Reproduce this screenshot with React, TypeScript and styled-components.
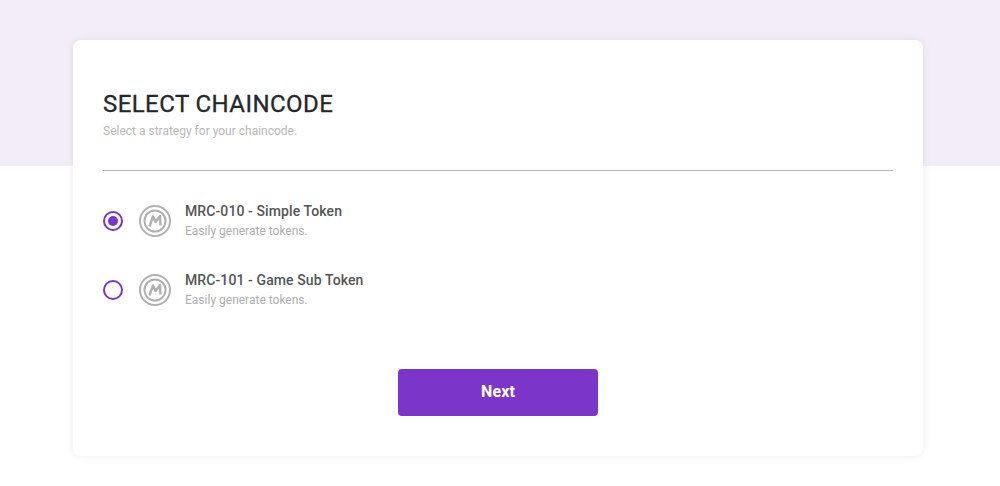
import React, { useState } from 'react';
import styled, { createGlobalStyle } from 'styled-components';

const GlobalStyle = createGlobalStyle`
  html, body {
    margin: 0;
    padding: 0;
    background: #fff;
    font-family: Roboto, "Liberation Sans", sans-serif;
  }
`;

const Page = styled.div`
  position: relative;
  height: 486px;
  overflow: hidden;
`;

const Banner = styled.div`
  height: 166px;
  background: #f3edf8;
`;

const Card = styled.div`
  position: absolute;
  top: 40px;
  left: 73px;
  box-sizing: border-box;
  width: 850px;
  height: 416px;
  padding: 50px 30px 0;
  background: #fff;
  border-radius: 8px;
  box-shadow: 0 0 10px rgba(0, 0, 0, 0.08);
`;

const Header = styled.div`
  height: 80px;
  border-bottom: 1px solid #b5b5b5;
`;

const Title = styled.h1`
  margin: 0;
  font-size: 24px;
  line-height: 28px;
  font-weight: 400;
  letter-spacing: 0.43px;
  color: #24272b;
  -webkit-text-stroke: 0.3px #24272b;
`;

const Subtitle = styled.p`
  margin: 6px 0 0;
  font-size: 12px;
  line-height: 14px;
  color: #b8b8b8;
`;

const Options = styled.div`
  display: flex;
  flex-direction: column;
  gap: 29px;
  padding-top: 30px;
`;

const Option = styled.label`
  display: flex;
  align-items: center;
  height: 40px;
  cursor: pointer;
`;

const Radio = styled.span<{ $checked: boolean }>`
  display: flex;
  align-items: center;
  justify-content: center;
  box-sizing: border-box;
  width: 20px;
  height: 20px;
  margin-right: 16px;
  border: 2px solid #7b35c4;
  border-radius: 50%;

  &::after {
    content: '';
    display: ${({ $checked }) => ($checked ? 'block' : 'none')};
    width: 10px;
    height: 10px;
    border-radius: 50%;
    background: #7b35c4;
  }
`;

const HiddenInput = styled.input`
  display: none;
`;

const LogoMark = styled.svg`
  flex: none;
  width: 32px;
  height: 32px;
  margin-right: 14px;
`;

const OptionText = styled.div`
  display: flex;
  flex-direction: column;
  margin-top: -1px;
`;

const OptionName = styled.span`
  font-size: 14px;
  line-height: 16px;
  font-weight: 500;
  letter-spacing: 0.1px;
  color: #555;
`;

const OptionHint = styled.span`
  margin-top: 5px;
  font-size: 12px;
  line-height: 14px;
  color: #adadad;
`;

const Footer = styled.div`
  display: flex;
  justify-content: center;
  padding-top: 59px;
`;

const NextButton = styled.button`
  width: 200px;
  height: 47px;
  padding: 0 0 2px;
  border: 0;
  border-radius: 4px;
  background: #7b35c9;
  color: #fff;
  font-family: inherit;
  font-size: 16px;
  font-weight: 700;
  letter-spacing: 0.1px;
  cursor: pointer;
`;

const Logo = () => (
  <LogoMark viewBox="0 0 32 32" fill="none" stroke="#b0b0b0">
    <circle cx="16" cy="16" r="15" strokeWidth="2" />
    <circle cx="16" cy="16" r="10.5" strokeWidth="2" />
    <path d="M10.5 21.5 L14 11.5 L16.5 17 L21 11 L21.5 20.5" strokeWidth="2.4" strokeLinejoin="round" />
  </LogoMark>
);

const OPTIONS = [
  { id: 'mrc010', name: 'MRC-010 - Simple Token' },
  { id: 'mrc101', name: 'MRC-101 - Game Sub Token' },
];

export default function App() {
  const [selected, setSelected] = useState('mrc010');

  return (
    <Page>
      <GlobalStyle />
      <Banner />
      <Card>
        <Header>
          <Title>SELECT CHAINCODE</Title>
          <Subtitle>Select a strategy for your chaincode.</Subtitle>
        </Header>
        <Options>
          {OPTIONS.map((option) => (
            <Option key={option.id}>
              <HiddenInput
                type="radio"
                name="chaincode"
                checked={selected === option.id}
                onChange={() => setSelected(option.id)}
              />
              <Radio $checked={selected === option.id} />
              <Logo />
              <OptionText>
                <OptionName>{option.name}</OptionName>
                <OptionHint>Easily generate tokens.</OptionHint>
              </OptionText>
            </Option>
          ))}
        </Options>
        <Footer>
          <NextButton>Next</NextButton>
        </Footer>
      </Card>
    </Page>
  );
}
